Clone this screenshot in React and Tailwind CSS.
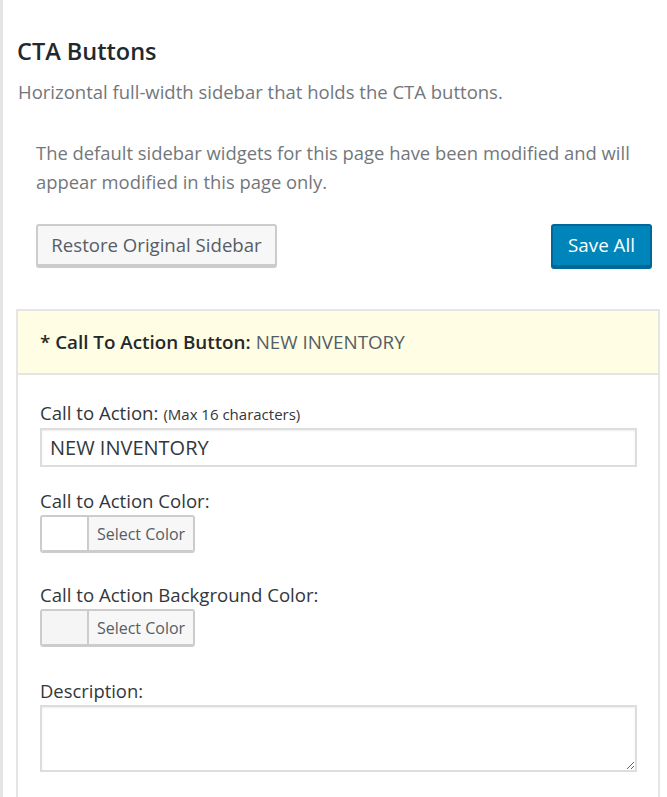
import React from "react";

function ColorPicker({ swatch }) {
  return (
    <div className="mt-[1px] flex h-[37px] w-[155px] rounded-[3px] border-2 border-[#cccccc] shadow-[0_1px_0_#cccccc] overflow-hidden">
      <div className={`w-[47px] h-full border-r-2 border-[#cccccc] ${swatch}`}></div>
      <div className="flex-1 bg-[#f7f7f7] flex items-center justify-center text-[16px] text-[#555d66]">
        Select Color
      </div>
    </div>
  );
}

export default function App() {
  return (
    <div
      className="min-h-screen bg-white border-l-[3px] border-[#e5e5e5] pl-[13px] pr-[7px] pt-[36px] pb-[40px]"
      style={{ fontFamily: '"Open Sans", "Noto Sans", sans-serif' }}
    >
      <h2 className="ml-[1px] text-[23.5px] leading-[30px] font-semibold text-[#23282d]">
        CTA Buttons
      </h2>
      <p className="ml-[2px] mt-[13px] text-[18.5px] leading-[26px] text-[#72777c]">
        Horizontal full-width sidebar that holds the CTA buttons.
      </p>

      <div className="pl-[20px] pr-[8px] mt-[33px]">
        <p className="text-[18.4px] leading-[29px] text-[#72777c]">
          The default sidebar widgets for this page have been modified and will appear modified in this page only.
        </p>
        <div className="flex items-start justify-between mt-[28px]">
          <button className="h-[42px] w-[241px] rounded-[3px] border-2 border-[#cccccc] bg-[#f7f7f7] shadow-[0_2px_0_#cccccc] text-[18.6px] text-[#555d66]">
            Restore Original Sidebar
          </button>
          <button className="h-[43px] w-[101px] rounded-[3px] border-2 border-[#006799] bg-[#0085ba] shadow-[0_2px_0_#006799] text-[18.8px] text-white">
            Save All
          </button>
        </div>
      </div>

      <div className="mt-[42px] border-2 border-[#e5e5e5]">
        <div className="h-[64px] bg-[#fffde3] border-b-2 border-[#e5e5e5] flex items-center pl-[22px] text-[18.8px]">
          <span className="font-semibold text-[#23282d]">* Call To Action Button:</span>
          <span className="ml-[5px] text-[#555d66]">NEW INVENTORY</span>
        </div>
        <div className="pl-[22px] pr-[21px] pt-[25px] pb-[30px]">
          <div className="h-[26px] flex items-baseline text-[18.6px] leading-[26px] text-[#32373c]">
            <span>Call to Action:</span>
            <span className="ml-[5px] text-[15px]">(Max 16 characters)</span>
          </div>
          <div className="mt-[2px] h-[39px] border-2 border-[#dddddd] shadow-[inset_0_1px_2px_rgba(0,0,0,0.07)] flex items-center pl-[8px] text-[20px] text-[#32373c]">
            NEW INVENTORY
          </div>

          <div className="mt-[21px] text-[18.6px] leading-[26px] text-[#32373c]">
            Call to Action Color:
          </div>
          <ColorPicker swatch="bg-white" />

          <div className="mt-[30px] text-[18.6px] leading-[26px] text-[#32373c]">
            Call to Action Background Color:
          </div>
          <ColorPicker swatch="bg-[#f5f5f5]" />

          <div className="mt-[32px] text-[18.4px] leading-[26px] text-[#32373c]">
            Description:
          </div>
          <textarea className="mt-[1px] block w-full h-[67px] border-2 border-[#dddddd] shadow-[inset_0_1px_2px_rgba(0,0,0,0.07)] resize-y"></textarea>
        </div>
      </div>
    </div>
  );
}
